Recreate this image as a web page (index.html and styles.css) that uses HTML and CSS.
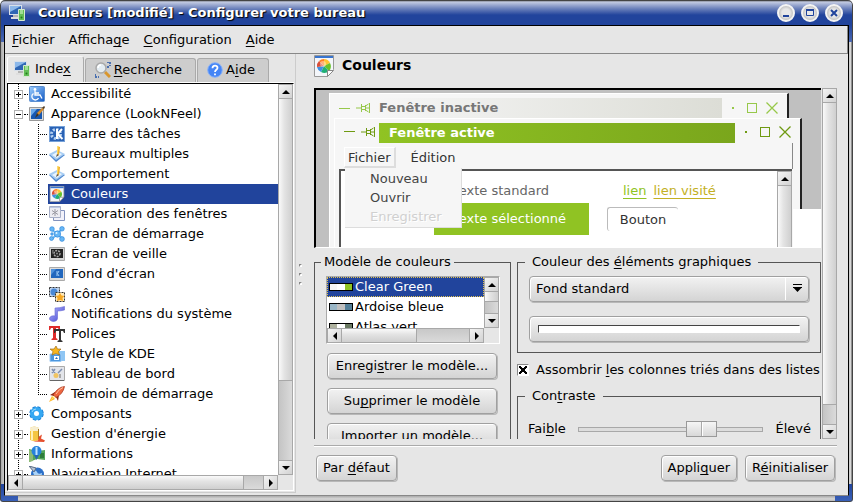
FILE: index.html
```
<!DOCTYPE html>
<html lang="fr">

<head>
    <meta charset="utf-8">
    <title>Couleurs [modifié] - Configurer votre bureau</title>
    <meta name="viewport" content="width=device-width, initial-scale=1.0">
    <link rel="stylesheet" href="styles.css">
</head>

<body>
    <!-- icons -->
    <svg class="sprite">
        <defs>
            <linearGradient id="blue" x1="0" y1="0" x2="1" y2="1">
                <stop offset="0" stop-color="#9fd0ff" />
                <stop offset="1" stop-color="#1158c4" />
            </linearGradient>
            <linearGradient id="note" x1="0" y1="0" x2="1" y2="1">
                <stop offset="0" stop-color="#b9bcff" />
                <stop offset="1" stop-color="#3d3fd0" />
            </linearGradient>
        </defs>
        <symbol id="i-desktop" viewBox="0 0 16 16">
            <path d="M0 0h13v10H0z" fill="#d8e0ea" />
            <path d="M1 1h11v8H1z" fill="#2f66b4" />
            <path d="M1 1h11L1 7z" fill="#8cb8ea" />
            <path d="M4 10h5v2H4z" fill="#b5b5b5" />
            <path d="M2 12h8v2H2z" fill="#dedede" />
            <path d="M9.500 4.500h6v11h-6z" fill="#62bd55" stroke="#d5e8d0" />
            <path d="M11 6h3M11 8h3" stroke="#e0ffd8" />
            <circle cx="12.500" cy="12.500" r="1" fill="#237a1b" />
        </symbol>
        <symbol id="i-search" viewBox="0 0 16 16">
            <path d="M12 0h3v4M0 12v3h4M13 4v3" fill="none" stroke="#4a70b0" stroke-width="2" stroke-dasharray="2 1" />
            <path d="M10 10l5 5" stroke="#d9962d" stroke-width="3" />
            <circle cx="6" cy="6" r="5" fill="#e3ecf2" stroke="#a9a9a9" stroke-width="1.500" />
            <path d="M3 6a3 3 0 0 1 3-3" fill="none" stroke="#fff" stroke-width="1.500" />
        </symbol>
        <symbol id="i-help" viewBox="0 0 16 16">
            <circle cx="8" cy="8" r="7.300" fill="#4585f5" stroke="#8ab2f8" />
            <path d="M5.500 6.300C5.500 2.800 10.700 3 10.500 6 10.300 7.800 8 7.800 8 10M8 11.500v1.700" fill="none" stroke="#fff" stroke-width="1.800" />
        </symbol>
        <symbol id="i-access" viewBox="0 0 16 16">
            <rect x=".5" y=".5" width="15" height="15" rx="1" fill="url(#blue)" stroke="#5c8fd0" />
            <circle cx="6" cy="3.500" r="1.400" fill="#fff" />
            <path d="M6 5v4h5l2 3.500M6 7h4M4.500 7.500a3.500 3.500 0 1 0 5 4.500" fill="none" stroke="#fff" stroke-width="1.300" />
        </symbol>
        <symbol id="i-look" viewBox="0 0 16 16">
            <path d="M.5 1.500h14v13H.5z" fill="#dcdcdc" stroke="#999" />
            <path d="M2 3h11v10H2z" fill="#1757b0" />
            <path d="M2 3h6l-6 7z" fill="#69a8ea" />
            <path d="M7 11l1-4 5-5 2 1-5 6z" fill="#d58b2b" />
            <path d="M6 12l2-5 2 2z" fill="#333" />
            <path d="M13 2l2-2 1 1-1 2z" fill="#553c22" />
        </symbol>
        <symbol id="i-kpanel" viewBox="0 0 16 16">
            <rect x=".5" y=".5" width="15" height="15" fill="#2a62b5" stroke="#76a1d8" />
            <circle cx="7" cy="8" r="4.500" fill="none" stroke="#b7d3f3" stroke-width="3" stroke-dasharray="2 1.500" />
            <path d="M8 3v10M13 3L8.500 8l5 5" fill="none" stroke="#fff" stroke-width="2" />
        </symbol>
        <symbol id="i-pencil" viewBox="0 0 16 16">
            <path d="M0 9l8-4 8 4-9 7z" fill="#4f87cf" />
            <path d="M0 8l8-4 8 4-9 6z" fill="#a7cdf3" />
            <path d="M3 9l5-3 5 2-5 4z" fill="#e9f5ff" />
            <path d="M8 0l3 1-1 8-2-1z" fill="#efac23" />
            <path d="M8 0h1.500L9 8h-.7z" fill="#ffe173" />
            <path d="M8 8l2 1-3 2z" fill="#5f513c" />
        </symbol>
        <symbol id="i-colors" viewBox="0 0 20 22">
            <path d="M.5.5h19v14l-6 7H.5z" fill="#f4f6fa" stroke="#999" />
            <path d="M1 1h18v2H1z" fill="#3874ce" />
            <path d="M10 11L10 4A7 7 0 0 1 16 8z" fill="#ffc331" />
            <path d="M10 11L16 8A7 7 0 0 1 15 16z" fill="#68c22b" />
            <path d="M10 11L15 16A7 7 0 0 1 7 17z" fill="#20af76" />
            <path d="M10 11L7 17A7 7 0 0 1 3 12z" fill="#3e8fe2" />
            <path d="M10 11L3 12A7 7 0 0 1 5 6z" fill="#d9503a" />
            <path d="M10 11L5 6A7 7 0 0 1 10 4z" fill="#ff7e24" />
            <circle cx="9" cy="9" r="3" fill="#fff" opacity=".4" />
            <path d="M13.500 21.500v-6h6z" fill="#fff" stroke="#888" />
        </symbol>
        <symbol id="i-windows" viewBox="0 0 16 16">
            <path d="M4.500 4.500h11v10h-11z" fill="#f2f2fa" stroke="#8292bd" />
            <path d="M.5.500h11v11H.5z" fill="#ececf2" stroke="#a8b0c8" />
            <path d="M1 1h10v1H1z" fill="#bcc8e4" />
            <path d="M6 3v7M3 4.500l6 4M9 4.500l-6 4" stroke="#9a9aa3" />
        </symbol>
        <symbol id="i-splash" viewBox="0 0 16 16">
            <path d="M2 3l12 10M3 13L13 3" stroke="#70bdf5" stroke-width="2" />
            <g fill="#67b7f5" stroke="#2681d8" stroke-width=".6">
                <circle cx="8.500" cy="8" r="3.200" />
                <circle cx="3" cy="3" r="2.300" />
                <circle cx="13" cy="2.800" r="2.300" />
                <circle cx="2.500" cy="12.500" r="2" />
                <circle cx="13" cy="13" r="2.400" />
                <circle cx="3" cy="8" r="1.300" />
            </g>
            <circle cx="7.500" cy="7" r="1" fill="#e3f6ff" />
        </symbol>
        <symbol id="i-saver" viewBox="0 0 16 16">
            <path d="M.5 1.500h15v13H.5z" fill="#d5d5d5" stroke="#aaa" />
            <path d="M2 3h12v9H2z" fill="#222" />
            <circle cx="8" cy="7.500" r="3" fill="none" stroke="#aaa" stroke-width="1.500" stroke-dasharray="2 1" />
            <circle cx="8" cy="7.500" r="1" fill="#888" />
            <path d="M3 4h2l-2 5z" fill="#666" />
        </symbol>
        <symbol id="i-wall" viewBox="0 0 16 16">
            <path d="M.5 1.500h15v13H.5z" fill="#ddd" stroke="#aaa" />
            <path d="M2 3h12v9H2z" fill="#2166bd" />
            <path d="M2 3h5l-5 6z" fill="#4e91dc" />
            <path d="M8 5v5M10 5L8.500 7.500 10 10" fill="none" stroke="#a0cdf7" />
        </symbol>
        <symbol id="i-icons" viewBox="0 0 16 16">
            <path d="M.5 1.500h10v9H.5z" fill="#bcd2ef" stroke="#333" stroke-dasharray="2 1" />
            <circle cx="5" cy="6" r="3.500" fill="#4a88d5" />
            <path d="M6.500 6.500h9v9h-9z" fill="#ffe9b8" stroke="#333" stroke-dasharray="2 1" />
            <path d="M11 7l1.500 2.500 3 .5-2 2 .5 3-3-1-3 1 .5-3-2-2 3-.5z" fill="#f7a823" />
        </symbol>
        <symbol id="i-note" viewBox="0 0 16 16">
            <path d="M6 2q5 0 9.500-1.500V4q-4 1-7 1v7.500A4 2.800 0 1 1 6 10z" fill="url(#note)" stroke="#6364d4" stroke-width=".6" />
        </symbol>
        <symbol id="i-fonts" viewBox="0 0 16 16">
            <path d="M0 0h11v4h-1L9 2H7v10l1.500 1v1H2.500v-1L4 12V2H2L1 4H0z" fill="#e02c2c" />
            <path d="M5 3h11v4h-1l-1-2h-2v9l1.500 1v1h-5v-1L10 14V5H7L6 7H5z" fill="#333" />
        </symbol>
        <symbol id="i-style" viewBox="0 0 16 16">
            <path d="M9 5h7v10H9z" fill="#8fc6f4" />
            <path d="M1 8h11v7.500H1z" fill="#4c97df" stroke="#9dcaf4" />
            <path d="M5 10h5v4H5z" fill="#fff" />
            <path d="M6 13l1.500-2L9 13z" fill="#2869b5" />
            <path d="M7 0l1.500 3L12 3 9.500 5.500l1 3.500L7 7.500 3 9l1-3.500L1 3h4z" fill="#f8b51e" stroke="#8f5f12" stroke-width=".6" />
        </symbol>
        <symbol id="i-board" viewBox="0 0 16 16">
            <path d="M.5.500h15v14H.5z" fill="#e3e5ea" stroke="#aaa" />
            <path d="M3 3l3 4M6 3L3 7M9 7l4-4" stroke="#7d8fb0" stroke-width="1.500" />
            <circle cx="7" cy="9.500" r="2.500" fill="#f0c462" />
            <path d="M11 8v4" stroke="#aaa" stroke-width="2" />
            <path d="M1 14.500h14" stroke="#666" />
        </symbol>
        <symbol id="i-rocket" viewBox="0 0 16 16">
            <path d="M0 16l3-6 3 3z" fill="#ffb52b" />
            <path d="M1 9l5-3 4 3-1 6-2-4-2-1z" fill="#8e2a16" />
            <path d="M15.500.5Q9 1 4 9l3 2.500Q14 8 15.500.5z" fill="#ee6640" stroke="#a03018" stroke-width=".7" />
            <path d="M14 1.500Q10 3 7 8" fill="none" stroke="#ffc2a1" />
            <path d="M1 15l4-5 1 1z" fill="#ffed72" />
        </symbol>
        <symbol id="i-gear" viewBox="0 0 16 16">
            <circle cx="7.500" cy="7.500" r="5.700" fill="none" stroke="#1579d2" stroke-width="3" stroke-dasharray="3 1.500" />
            <circle cx="7.500" cy="7.500" r="4.500" fill="none" stroke="#35a8f2" stroke-width="4" />
            <path d="M3 6q1-3 4-3" fill="none" stroke="#9ddaff" />
        </symbol>
        <symbol id="i-battery" viewBox="0 0 16 16">
            <path d="M1 2q4-3 9 0v12q-4 2-9 0z" fill="#f4c542" />
            <path d="M1 2q4-3 9 0v3H1z" fill="#f6edd1" />
            <path d="M3 3v11" stroke="#fff0b5" stroke-width="2" />
            <path d="M9.500 3v10" stroke="#a87c22" />
            <path d="M4 15.500l5-1 1-4 3-2-1 4 4 2-1 1.500z" fill="#e5502f" />
        </symbol>
        <symbol id="i-info" viewBox="0 0 16 16">
            <path d="M0 3l8 2 8-1v10l-8-1-8 3z" fill="#54a65a" />
            <path d="M0 4l4 1v10l-4 1z" fill="#8dbb75" />
            <path d="M11 7h4v5h-4z" fill="#2e7d3b" />
            <circle cx="7.500" cy="5" r="5" fill="#2782dc" />
            <path d="M7.500 1v8" stroke="#bfe4ff" stroke-width="2" />
            <path d="M5 9h5l-2.500 5z" fill="#2367b5" />
        </symbol>
        <symbol id="i-globe" viewBox="0 0 16 16">
            <circle cx="8.500" cy="8" r="6.500" fill="#2c70c9" />
            <path d="M4 6q3-3 4 0t5 1q0 4-4 4T4 6z" fill="#a9d2f7" />
            <path d="M0 0l7 2-2 4z" fill="#b9c4d2" stroke="#586b85" />
        </symbol>
        <symbol id="i-pin" viewBox="0 0 15 10">
            <path d="M0 5h5M5.500 1v8M6 3.500h3M6 6.500h3M9.500 2v6M9.500 3l3-2M9.500 7l3 2M13.500 0v10M9.500 5h4" fill="none" stroke="currentColor" />
        </symbol>
        <symbol id="i-close" viewBox="0 0 12 12">
            <path d="M.5.5l11 11M11.500.5l-11 11" stroke="currentColor" stroke-width="1.300" />
        </symbol>
    </svg>

    <div class="window">
        <header class="titlebar">
            <svg class="icon"><use href="#i-desktop" /></svg>
            <h1>Couleurs [modifié] - Configurer votre bureau</h1>
            <button type="button" class="round" aria-label="Réduire"><svg viewBox="0 0 10 10"><path d="M2 8h6" stroke="#21449c" stroke-width="2" /></svg></button>
            <button type="button" class="round" aria-label="Agrandir"><svg viewBox="0 0 10 10"><path d="M1.500 2.500h7v5h-7z" fill="none" stroke="#21449c" /><path d="M1 2h8" stroke="#21449c" stroke-width="2" /></svg></button>
            <button type="button" class="round" aria-label="Fermer"><svg viewBox="0 0 10 10"><path d="M2 2l6 6M8 2l-6 6" stroke="#21449c" stroke-width="2" /></svg></button>
        </header>

        <div class="client">
            <nav class="menubar">
                <button type="button"><u>F</u>ichier</button>
                <button type="button">Afficha<u>g</u>e</button>
                <button type="button"><u>C</u>onfiguration</button>
                <button type="button"><u>A</u>ide</button>
            </nav>

            <div class="main">
                <aside class="sidebar">
                    <div class="tabs">
                        <button type="button" class="tab active"><svg class="icon"><use href="#i-desktop" /></svg><span>Inde<u>x</u></span></button>
                        <button type="button" class="tab"><svg class="icon"><use href="#i-search" /></svg><span><u>R</u>echerche</span></button>
                        <button type="button" class="tab"><svg class="icon"><use href="#i-help" /></svg><span>A<u>i</u>de</span></button>
                    </div>

                    <div class="treebox">
                        <ul class="tree">
                            <li><span class="twist plus"></span><svg class="icon"><use href="#i-access" /></svg><span class="name">Accessibilité</span></li>
                            <li><span class="twist"></span><svg class="icon"><use href="#i-look" /></svg><span class="name">Apparence (LookNFeel)</span></li>
                            <li class="child"><svg class="icon"><use href="#i-kpanel" /></svg><span class="name">Barre des tâches</span></li>
                            <li class="child"><svg class="icon"><use href="#i-pencil" /></svg><span class="name">Bureaux multiples</span></li>
                            <li class="child"><svg class="icon"><use href="#i-pencil" /></svg><span class="name">Comportement</span></li>
                            <li class="child selected"><svg class="icon"><use href="#i-colors" /></svg><span class="name">Couleurs</span></li>
                            <li class="child"><svg class="icon"><use href="#i-windows" /></svg><span class="name">Décoration des fenêtres</span></li>
                            <li class="child"><svg class="icon"><use href="#i-splash" /></svg><span class="name">Écran de démarrage</span></li>
                            <li class="child"><svg class="icon"><use href="#i-saver" /></svg><span class="name">Écran de veille</span></li>
                            <li class="child"><svg class="icon"><use href="#i-wall" /></svg><span class="name">Fond d'écran</span></li>
                            <li class="child"><svg class="icon"><use href="#i-icons" /></svg><span class="name">Icônes</span></li>
                            <li class="child"><svg class="icon"><use href="#i-note" /></svg><span class="name">Notifications du système</span></li>
                            <li class="child"><svg class="icon"><use href="#i-fonts" /></svg><span class="name">Polices</span></li>
                            <li class="child"><svg class="icon"><use href="#i-style" /></svg><span class="name">Style de KDE</span></li>
                            <li class="child"><svg class="icon"><use href="#i-board" /></svg><span class="name">Tableau de bord</span></li>
                            <li class="child last"><svg class="icon"><use href="#i-rocket" /></svg><span class="name">Témoin de démarrage</span></li>
                            <li><span class="twist plus"></span><svg class="icon"><use href="#i-gear" /></svg><span class="name">Composants</span></li>
                            <li><span class="twist plus"></span><svg class="icon"><use href="#i-battery" /></svg><span class="name">Gestion d'énergie</span></li>
                            <li><span class="twist plus"></span><svg class="icon"><use href="#i-info" /></svg><span class="name">Informations</span></li>
                            <li><span class="twist plus"></span><svg class="icon"><use href="#i-globe" /></svg><span class="name">Navigation Internet</span></li>
                        </ul>
                        <div class="scroll vertical">
                            <button type="button" class="arrow up" aria-label="Haut"></button>
                            <div class="thumb tree-v"></div>
                            <button type="button" class="arrow down" aria-label="Bas"></button>
                        </div>
                        <div class="scroll horizontal">
                            <button type="button" class="arrow left" aria-label="Gauche"></button>
                            <div class="thumb tree-h"></div>
                            <button type="button" class="arrow right" aria-label="Droite"></button>
                        </div>
                    </div>
                </aside>

                <div class="splitter"><i></i><i></i><i></i></div>

                <section class="panel">
                    <div class="heading">
                        <svg><use href="#i-colors" /></svg>
                        <h2>Couleurs</h2>
                    </div>

                    <div class="scrollarea">
                        <div class="page">
                            <!-- live preview of the color scheme -->
                            <div class="preview">
                                <div class="pwin inactive">
                                    <div class="ptitle">
                                        <span class="dash"></span>
                                        <svg class="pin"><use href="#i-pin" /></svg>
                                        <span class="ptext">Fenêtre inactive</span>
                                        <span class="dot"></span>
                                        <span class="square"></span>
                                        <svg class="close"><use href="#i-close" /></svg>
                                    </div>
                                </div>
                                <div class="pwin front">
                                    <div class="ptitle">
                                        <span class="dash"></span>
                                        <svg class="pin"><use href="#i-pin" /></svg>
                                        <span class="ptext">Fenêtre active</span>
                                        <span class="dot"></span>
                                        <span class="square"></span>
                                        <svg class="close"><use href="#i-close" /></svg>
                                    </div>
                                    <div class="pmenu">
                                        <button type="button" class="open">Fichier</button>
                                        <button type="button">Édition</button>
                                    </div>
                                    <div class="pbody">
                                        <div class="pgrid">
                                            <span class="standard">Texte standard</span>
                                            <span class="links"><a href="#">lien</a><a href="#" class="visited">lien visité</a></span>
                                            <span class="marked">Texte sélectionné</span>
                                            <button type="button" class="pbutton">Bouton</button>
                                        </div>
                                        <div class="scroll vertical">
                                            <button type="button" class="arrow up" aria-label="Haut"></button>
                                            <div class="thumb full"></div>
                                        </div>
                                    </div>
                                    <ul class="popup">
                                        <li>Nouveau</li>
                                        <li>Ouvrir</li>
                                        <li class="disabled">Enregistrer</li>
                                    </ul>
                                </div>
                                <div class="blank"></div>
                            </div>

                            <div class="columns">
                                <fieldset class="schemes">
                                    <legend>Modèle de couleurs</legend>
                                    <div class="group">
                                        <div class="listbox">
                                            <ul>
                                                <li class="selected"><span class="swatch green"><i></i><i></i><i></i></span>Clear Green</li>
                                                <li><span class="swatch slate"><i></i><i></i><i></i></span>Ardoise bleue</li>
                                                <li><span class="swatch atlas"><i></i><i></i><i></i></span>Atlas vert</li>
                                            </ul>
                                            <div class="scroll vertical">
                                                <button type="button" class="arrow up" aria-label="Haut"></button>
                                                <div class="thumb list-v"></div>
                                                <button type="button" class="arrow down" aria-label="Bas"></button>
                                            </div>
                                            <div class="scroll horizontal">
                                                <button type="button" class="arrow left" aria-label="Gauche"></button>
                                                <div class="thumb list-h"></div>
                                                <button type="button" class="arrow right" aria-label="Droite"></button>
                                            </div>
                                        </div>
                                        <button type="button" class="button">Enregi<u>s</u>trer le modèle...</button>
                                        <button type="button" class="button">Su<u>p</u>primer le modèle</button>
                                        <button type="button" class="button">Importer un modèle...</button>
                                    </div>
                                </fieldset>

                                <div class="options">
                                    <fieldset>
                                        <legend><label for="element">Couleur des <u>é</u>léments graphiques</label></legend>
                                        <div class="group">
                                            <div class="combo">
                                                <select id="element">
                                                    <option>Fond standard</option>
                                                </select>
                                            </div>
                                            <button type="button" class="button color" aria-label="Couleur"><span></span></button>
                                        </div>
                                    </fieldset>
                                    <div class="check">
                                        <input type="checkbox" id="shade" checked>
                                        <label for="shade">Assombrir <u>l</u>es colonnes triés dans des listes</label>
                                    </div>
                                    <fieldset>
                                        <legend>Con<u>t</u>raste</legend>
                                        <div class="contrast">
                                            <label for="contrast">Fai<u>b</u>le</label>
                                            <input type="range" id="contrast" min="0" max="10" value="7">
                                            <span>Élevé</span>
                                        </div>
                                    </fieldset>
                                </div>
                            </div>
                        </div>
                        <div class="scroll vertical">
                            <button type="button" class="arrow up" aria-label="Haut"></button>
                            <div class="thumb page-v"></div>
                            <button type="button" class="arrow down" aria-label="Bas"></button>
                        </div>
                    </div>

                    <footer>
                        <button type="button" class="button">Par <u>d</u>éfaut</button>
                        <button type="button" class="button push">Appli<u>q</u>uer</button>
                        <button type="button" class="button">R<u>é</u>initialiser</button>
                    </footer>
                </section>
            </div>
        </div>
    </div>
</body>

</html>
```

FILE: styles.css
```
* {
    box-sizing: border-box;
}

body {
    margin: 0;
    background-color: #fff;
    color: #000;
    font-family: "DejaVu Sans", sans-serif;
    font-size: 13px;
    line-height: 20px;
    white-space: nowrap;
}

button,
select,
input {
    font: inherit;
    color: inherit;
    margin: 0;
}

button {
    padding: 0;
    border: none;
    background: none;
}

ul {
    list-style: none;
    margin: 0;
    padding: 0;
}

u {
    text-underline-offset: 2px;
    text-decoration-thickness: 1px;
    text-decoration-skip-ink: none;
}

.sprite {
    position: absolute;
    width: 0;
    height: 0;
}

.icon {
    width: 16px;
    height: 16px;
    flex: none;
}

/* window frame */

.window {
    display: flex;
    flex-direction: column;
    height: 100vh;
    padding: 0 4px 6px;
    border-radius: 5px 5px 3px 3px;
    box-shadow: inset 0 0 0 1px #444;
    background:
        linear-gradient(#21449c, #3b62ba) left bottom / 18px 18px no-repeat,
        linear-gradient(#21449c, #3b62ba) right bottom / 18px 18px no-repeat,
        linear-gradient(#333, #c3cbe2 2px, #7387be 8px, #21449c 15px, #21449c 25px, #4c69b2 42px) top / 100% 42px no-repeat,
        linear-gradient(#aaa, #d8d8d8 3px, #b5b5b5 5px, #333 6px) bottom / 100% 6px no-repeat,
        linear-gradient(90deg, #555 1px, #aaa 1px, #c9c9c9 4px, #c9c9c9 calc(100% - 4px), #ddd calc(100% - 2px), #444 calc(100% - 1px));
}

.titlebar {
    display: flex;
    align-items: center;
    gap: 6px;
    height: 25px;
    padding: 0 6px 0 5px;
}

.titlebar h1 {
    flex: 1;
    margin: 0 0 0 7px;
    color: #fff;
    font-size: 13px;
    text-shadow: 1px 1px 1px #000;
}

.round {
    width: 18px;
    height: 18px;
    border: 2px solid #f4f4f4;
    border-radius: 50%;
    background: radial-gradient(circle, #e8e8e8 4px, #b5b5b5 8px);
}

.round svg {
    display: block;
    width: 10px;
    height: 10px;
    margin: 0 auto;
}

.client {
    flex: 1;
    display: flex;
    flex-direction: column;
    min-height: 0;
    border: 1px solid #000;
    border-bottom-color: #888;
    background-color: #e6e6e6;
}

.menubar {
    display: flex;
    height: 28px;
    border-bottom: 1px solid #888;
    border-right: 1px solid #888;
}

.menubar button {
    padding: 0 7px;
}

.main {
    flex: 1;
    display: flex;
    min-height: 0;
}

/* left side */

.sidebar {
    display: flex;
    flex-direction: column;
    width: 291px;
    margin-bottom: 2px;
    padding: 2px 1px 1px 2px;
    border: solid #ccc;
    border-width: 0 1px 1px 0;
}

.tabs {
    display: flex;
    align-items: flex-end;
    gap: 1px;
    height: 27px;
    border-bottom: 1px solid #fff;
}

.tab {
    display: flex;
    align-items: center;
    gap: 3px;
    height: 24px;
    padding: 0 13px 2px 9px;
    border: 1px solid #aaa;
    border-bottom: none;
    border-radius: 3px 3px 0 0;
    background-color: #cdcdcd;
}

.tab.active {
    gap: 5px;
    height: 26px;
    padding-left: 6px;
    padding-right: 12px;
    border-color: #f6f6f6 #aaa #fff #fff;
    background-color: #e6e6e6;
}

.treebox,
.listbox {
    display: grid;
    grid-template-columns: minmax(0, 1fr) 15px;
    grid-template-rows: minmax(0, 1fr) 15px;
    border: 1px solid #fff;
}

.treebox {
    flex: 1;
    min-height: 0;
    border-top-color: #000;
    border-left-color: #000;
}

.tree {
    overflow: hidden;
    background-color: #fff;
}

.tree li {
    position: relative;
    display: flex;
    align-items: center;
    height: 20px;
    padding-left: 6px;
    background: repeating-linear-gradient(#000 0 1px, transparent 1px 2px) 10px 0 / 1px 100% no-repeat;
}

.tree .child {
    padding-left: 41px;
    background:
        repeating-linear-gradient(#000 0 1px, transparent 1px 2px) 10px 0 / 1px 100% no-repeat,
        repeating-linear-gradient(#000 0 1px, transparent 1px 2px) 30px 0 / 1px 100% no-repeat,
        repeating-linear-gradient(90deg, #000 0 1px, transparent 1px 2px) 30px 10px / 9px 1px no-repeat;
}

.tree .last {
    background-size: 1px 100%, 1px 10px, 9px 1px;
}

.tree .selected {
    color: #fff;
    background:
        repeating-linear-gradient(#000 0 1px, transparent 1px 2px) 10px 0 / 1px 100% no-repeat,
        repeating-linear-gradient(#000 0 1px, transparent 1px 2px) 30px 0 / 1px 100% no-repeat,
        repeating-linear-gradient(90deg, #000 0 1px, transparent 1px 2px) 30px 10px / 9px 1px no-repeat,
        linear-gradient(#21449c, #21449c) 40px 0 / 100% 100% no-repeat;
}

.tree .name {
    margin-left: 6px;
}

.twist {
    width: 9px;
    height: 9px;
    margin-right: 6px;
    border: 1px solid #b0b0b0;
    background:
        linear-gradient(#000, #000) center / 5px 1px no-repeat,
        #fff;
}

.twist.plus {
    background:
        linear-gradient(#000, #000) center / 5px 1px no-repeat,
        linear-gradient(#000, #000) center / 1px 5px no-repeat,
        #fff;
}

.twist::after {
    content: "";
    position: absolute;
    left: 16px;
    top: 10px;
    width: 4px;
    border-top: 1px dotted #000;
}

/* scroll bars */

.scroll {
    display: flex;
    background-color: #d3d3d3;
    border: 1px solid #a8a8a8;
}

.scroll.vertical {
    flex-direction: column;
    width: 15px;
    background-image: linear-gradient(90deg, #c4c4c4, #dadada);
    border-top: none;
    border-bottom: none;
}

.scroll.horizontal {
    background-image: linear-gradient(#c8c8c8, #dadada);
    border-left: none;
    border-right: none;
}

.arrow {
    display: flex;
    align-items: center;
    justify-content: center;
    flex: none;
    background: linear-gradient(135deg, #f4f4f4, #d2d2d2);
}

.vertical .arrow {
    width: 13px;
    height: 15px;
    border: solid #a8a8a8;
    border-width: 1px 0;
}

.horizontal .arrow {
    width: 15px;
    height: 13px;
    border: solid #a8a8a8;
    border-width: 0 1px;
}

.arrow::before {
    content: "";
    border: 4px solid transparent;
}

.arrow.up::before {
    border-top: none;
    border-bottom-color: #000;
}

.arrow.down::before {
    border-bottom: none;
    border-top-color: #000;
}

.arrow.left::before {
    border-left: none;
    border-right-color: #000;
}

.arrow.right::before {
    border-right: none;
    border-left-color: #000;
}

.vertical .down {
    margin-top: auto;
}

.horizontal .right {
    margin-left: auto;
}

.vertical .thumb {
    border-bottom: 1px solid #a8a8a8;
    background: linear-gradient(90deg, #fafafa, #e4e4e4 40%, #cfcfcf);
}

.horizontal .thumb {
    border-right: 1px solid #a8a8a8;
    background: linear-gradient(#fafafa, #e4e4e4 40%, #cfcfcf);
}

.tree-v {
    height: 72%;
}

.tree-h {
    width: 82%;
}

.page-v {
    height: 86%;
}

.list-v {
    height: 20%;
}

.list-h {
    width: 48%;
}

.thumb.full {
    flex: 1;
    border-bottom: none;
}

/* right side */

.splitter {
    display: flex;
    flex-direction: column;
    align-items: center;
    justify-content: center;
    gap: 6px;
    width: 8px;
}

.splitter i {
    width: 3px;
    height: 3px;
    border: 1px solid #888;
    border-right-color: #fff;
    border-bottom-color: #fff;
}

.panel {
    flex: 1;
    display: flex;
    flex-direction: column;
    min-width: 0;
    padding: 0 11px 0 10px;
}

.heading {
    display: flex;
    gap: 8px;
    height: 34px;
    padding-top: 1px;
}

.heading svg {
    width: 20px;
    height: 22px;
}

.heading h2 {
    margin: 0;
    font-size: 14px;
}

.scrollarea {
    flex: 1;
    display: flex;
    gap: 1px;
    min-height: 0;
}

.page {
    flex: 1;
    min-width: 0;
    overflow: hidden;
}

/* preview */

.preview {
    position: relative;
    height: 160px;
    overflow: hidden;
    border: solid #000;
    border-width: 2px 0 1px 2px;
    border-bottom-color: #fff;
    background-color: #c0c0c0;
}

.pwin {
    position: absolute;
    bottom: 0;
    border: solid #fff;
    border-width: 1px 2px 0 1px;
    border-right-color: #222;
    background-color: #f6f6f6;
    color: #6f9a12;
}

.inactive {
    left: 13px;
    right: 32px;
    top: 3px;
    color: #97c84a;
}

.front {
    left: 18px;
    right: 19px;
    top: 28px;
}

.ptitle {
    display: flex;
    align-items: center;
    height: 20px;
    margin: 4px 9px 0 9px;
}

.dash {
    width: 11px;
    border-top: 1px solid;
}

.pin {
    width: 15px;
    height: 10px;
    margin: 0 3px 0 6px;
}

.front .dash,
.front .pin,
.front .dot,
.front .square,
.front .close {
    margin-bottom: 3px;
}

.ptext {
    flex: 1;
    padding-left: 10px;
    background: linear-gradient(90deg, #90c323, #7aa61c);
    color: #fff;
    font-weight: bold;
}

.inactive .ptext {
    padding-left: 5px;
    background: linear-gradient(90deg, #f6f6f6, #dcddd6);
    color: #777;
}

.dot {
    width: 2px;
    height: 2px;
    margin: 0 13px 0 10px;
    background-color: currentColor;
}

.square {
    width: 10px;
    height: 10px;
    margin-right: 9px;
    border: 1px solid;
}

.close {
    width: 12px;
    height: 12px;
}

.pmenu {
    display: flex;
    height: 26px;
    margin: 0 7px 0 4px;
    padding: 4px 0 1px 5px;
    border-right: 1px solid #888;
    color: #333;
}

.pmenu button {
    padding: 0 15px;
}

.pmenu .open {
    padding: 0 3px;
    border: 1px solid #fff;
    border-right: 2px solid #ddd;
    border-bottom: 2px solid #ddd;
}

.pbody {
    display: flex;
    height: 80px;
    margin: 0 8px 0 4px;
    border: solid #555;
    border-width: 2px 0 0 2px;
    background-color: #fff;
}

.pgrid {
    flex: 1;
    display: grid;
    grid-template-columns: 155px 1fr;
    grid-template-rows: 24px 32px;
    column-gap: 18px;
    align-items: center;
    padding: 8px 0 0 93px;
    color: #666;
}

.standard,
.marked {
    padding-left: 19px;
}

.marked {
    line-height: 32px;
    background-color: #90c323;
    color: #fff;
}

.links {
    display: flex;
    gap: 7px;
    padding-left: 16px;
}

.links a {
    color: #90c323;
    text-underline-offset: 3px;
}

.links .visited {
    color: #c3b023;
}

.pbutton {
    width: 71px;
    height: 24px;
    border: solid #bbb;
    border-width: 1px 0 0 1px;
    border-radius: 3px;
    color: #333;
}

.popup {
    position: absolute;
    left: 10px;
    top: 49px;
    width: 117px;
    padding: 1px 0 1px 25px;
    border: solid #ddd;
    border-width: 0 1px 1px 0;
    background-color: #f6f6f6;
    color: #444;
    line-height: 19px;
}

.popup .disabled {
    color: #d0d0d0;
    text-shadow: 1px 1px #fff;
}

.blank {
    position: absolute;
    right: 0;
    bottom: 0;
    width: 28px;
    height: 38px;
    background-color: #fff;
}

/* groups */

.columns {
    display: flex;
    gap: 6px;
    margin-top: 6px;
}

fieldset {
    min-width: 0;
    margin: 0;
    padding: 0;
    border: 1px solid #555;
    line-height: 16px;
}

legend {
    margin-left: 7px;
    padding: 0 7px;
}

.schemes {
    width: 197px;
}

.schemes legend {
    margin-left: 6px;
    padding: 0 3px;
}

.group {
    display: flex;
    flex-direction: column;
    gap: 14px;
    padding: 6px 11px 10px;
}

.schemes .group {
    gap: 9px;
    padding-right: 10px;
}

.options {
    flex: 1;
    min-width: 0;
}

.listbox {
    height: 68px;
    border-top-color: #aaa;
    border-left-color: #aaa;
}

.listbox ul {
    overflow: hidden;
    background-color: #fff;
}

.listbox li {
    display: flex;
    align-items: center;
    gap: 2px;
    height: 20px;
    padding-left: 2px;
}

.listbox .selected {
    background-color: #21449c;
    color: #fff;
    outline: 1px dotted #e0c050;
    outline-offset: -1px;
}

.swatch {
    display: flex;
    width: 24px;
    height: 8px;
    border: 1px solid #000;
}

.swatch i {
    flex: 1;
    background-color: #fff;
}

.green i:first-child {
    background-color: #f6f6f6;
}

.green i:last-child {
    background-color: #90c323;
}

.slate i {
    background-color: #c0c0c0;
}

.slate i:first-child {
    background-color: #9ab6c6;
}

.slate i:last-child {
    background-color: #527e98;
}

.atlas i:first-child {
    background-color: #afb29f;
}

.atlas i:last-child {
    background-color: #6b7a62;
}

.button,
.combo {
    height: 26px;
    border: 1px solid #a0a0a0;
    border-radius: 4px;
    background: linear-gradient(#f2f2f2, #d4d4d4);
    box-shadow: inset 1px 1px #fff, 1px 1px #b8b8b8;
}

.schemes .button {
    margin: 0 3px 0 1px;
}

.combo {
    position: relative;
}

.combo select {
    appearance: none;
    width: 100%;
    height: 24px;
    padding: 0 30px 0 6px;
    border: none;
    background: none;
}

.combo::before {
    content: "";
    position: absolute;
    right: 22px;
    top: 1px;
    bottom: 1px;
    border-left: 1px solid #fff;
}

.combo::after {
    content: "";
    position: absolute;
    right: 6px;
    top: 7px;
    width: 9px;
    height: 8px;
    background:
        linear-gradient(#000, #000) top / 9px 1px no-repeat,
        linear-gradient(#000, #000) 0 3px / 9px 5px no-repeat;
    clip-path: polygon(0 0, 100% 0, 100% 40%, 50% 100%, 0 40%);
}

.color {
    padding: 0 8px;
}

.color span {
    display: block;
    height: 8px;
    border: 1px solid #444;
    border-right-color: #fff;
    border-bottom-color: #fff;
    background-color: #fff;
}

.check {
    display: flex;
    align-items: center;
    gap: 7px;
    margin: 7px 0 8px;
}

.check input {
    appearance: none;
    flex: none;
    width: 12px;
    height: 12px;
    border: 1px solid #888;
    border-right-color: #fff;
    border-bottom-color: #fff;
    background:
        linear-gradient(45deg, transparent 42%, #000 42% 58%, transparent 58%) center / 8px 8px no-repeat,
        linear-gradient(-45deg, transparent 42%, #000 42% 58%, transparent 58%) center / 8px 8px no-repeat,
        #fff;
}

.contrast {
    display: flex;
    align-items: center;
    gap: 12px;
    padding: 15px 9px 12px 10px;
    line-height: 20px;
}

.contrast input {
    appearance: none;
    flex: 1;
    min-width: 0;
    height: 5px;
    border: 1px solid #a8a8a8;
    background-color: #ddd;
}

.contrast input::-webkit-slider-thumb {
    appearance: none;
    width: 31px;
    height: 16px;
    border: 1px solid #999;
    background: linear-gradient(90deg, transparent 14px, #aaa 14px 15px, #fff 15px 16px, transparent 16px), linear-gradient(#f6f6f6, #d8d8d8);
}

footer {
    display: flex;
    gap: 8px;
    margin-top: 6px;
    padding: 9px 2px 14px 2px;
    border-top: 1px solid #aaa;
    box-shadow: inset 0 1px #fff;
}

footer .button {
    padding: 0 6px;
}

.push {
    margin-left: auto;
}
```
